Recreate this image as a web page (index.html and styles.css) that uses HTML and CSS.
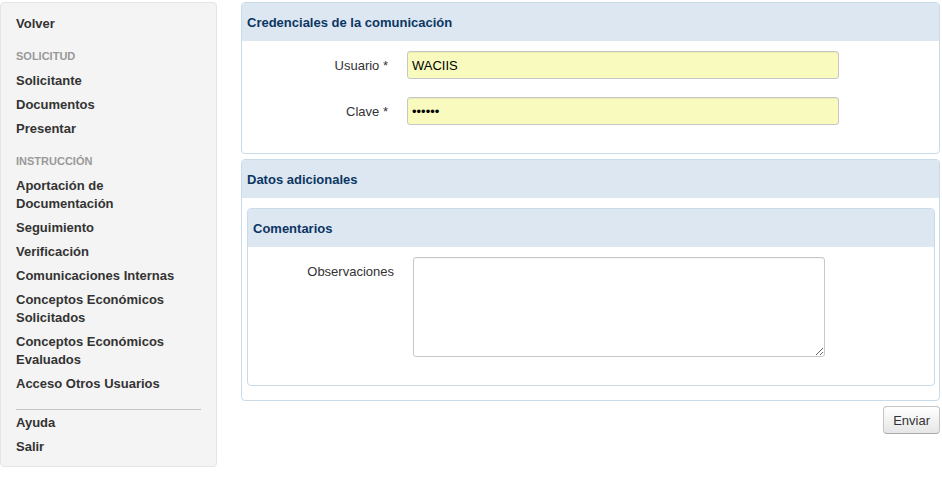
FILE: index.html
```html
<!DOCTYPE html>
<html lang="es">
<head>
<meta charset="utf-8">
<title>Credenciales</title>
<link rel="stylesheet" href="styles.css">
</head>
<body>
<div class="layout">
  <aside class="sidebar">
    <ul class="nav-list">
      <li><a href="#">Volver</a></li>
      <li class="nav-header">Solicitud</li>
      <li><a href="#">Solicitante</a></li>
      <li><a href="#">Documentos</a></li>
      <li><a href="#">Presentar</a></li>
      <li class="nav-header">Instrucción</li>
      <li><a href="#">Aportación de Documentación</a></li>
      <li><a href="#">Seguimiento</a></li>
      <li><a href="#">Verificación</a></li>
      <li><a href="#">Comunicaciones Internas</a></li>
      <li><a href="#">Conceptos Económicos Solicitados</a></li>
      <li><a href="#">Conceptos Económicos Evaluados</a></li>
      <li><a href="#">Acceso Otros Usuarios</a></li>
      <li class="divider"></li>
      <li><a href="#">Ayuda</a></li>
      <li><a href="#">Salir</a></li>
    </ul>
  </aside>
  <main class="main">
    <section class="panel">
      <h2 class="panel-title">Credenciales de la comunicación</h2>
      <div class="panel-body">
        <div class="row">
          <label class="row-label" for="usuario">Usuario *</label>
          <input class="field" id="usuario" type="text" value="WACIIS">
        </div>
        <div class="row">
          <label class="row-label" for="clave">Clave *</label>
          <input class="field" id="clave" type="password" value="secret">
        </div>
      </div>
    </section>
    <section class="panel">
      <h2 class="panel-title">Datos adicionales</h2>
      <div class="panel-body panel-body-outer">
        <section class="panel panel-inner">
          <h3 class="panel-title">Comentarios</h3>
          <div class="panel-body">
            <div class="row">
              <label class="row-label" for="obs">Observaciones</label>
              <textarea class="area" id="obs"></textarea>
            </div>
          </div>
        </section>
      </div>
    </section>
    <div class="actions">
      <button class="btn" type="button">Enviar</button>
    </div>
  </main>
</div>
</body>
</html>
```
FILE: styles.css
```css
* { box-sizing: border-box; }
html, body { margin: 0; padding: 0; background: #fff; }
body {
  font-family: "Liberation Sans", Arial, sans-serif;
  font-size: 13px;
  line-height: 18px;
  color: #333;
}
.layout {
  display: flex;
  align-items: flex-start;
  gap: 24px;
  padding-top: 2px;
}
.sidebar {
  width: 217px;
  flex: none;
  background: #f4f4f4;
  border: 1px solid #e4e4e4;
  border-radius: 4px;
  padding: 8px 0;
}
.nav-list {
  list-style: none;
  margin: 0;
  padding: 0 15px;
}
.nav-list li a {
  display: block;
  padding: 4px 0 2px;
  color: #333;
  font-weight: bold;
  text-decoration: none;
}
.nav-list .nav-header {
  padding: 3px 0;
  margin-top: 9px;
  font-size: 11px;
  font-weight: bold;
  color: #999;
  text-transform: uppercase;
}
.nav-list .divider {
  height: 1px;
  margin: 14px 0 0;
  background: #c4c4c4;
}
.main {
  width: 699px;
  flex: none;
}
.panel {
  border: 1px solid #c9dbe8;
  border-radius: 4px;
  background: #fff;
  margin-bottom: 5px;
  overflow: hidden;
}
.panel-title {
  margin: 0;
  height: 38px;
  padding: 11px 5px 9px;
  background: #dce7f2;
  color: #0c3662;
  font-size: 13px;
  line-height: 18px;
  font-weight: bold;
}
.panel-body {
  padding: 10px 0;
}
.panel-body-outer {
  padding: 10px 4px 14px 5px;
}
.panel-inner {
  margin-bottom: 0;
}
.row {
  display: grid;
  grid-template-columns: 146px auto;
  column-gap: 19px;
  align-items: start;
  margin-bottom: 18px;
}
.row-label {
  text-align: right;
  height: 28px;
  line-height: 26px;
  padding-top: 2px;
  color: #333;
}
.field {
  width: 432px;
  height: 28px;
  margin: 0;
  padding: 1px 4px 0;
  border: 1px solid #c6c6c6;
  border-radius: 3px;
  background: #f9fbbe;
  font-family: "Liberation Sans", Arial, sans-serif;
  font-size: 13px;
  color: #000;
  box-shadow: inset 0 1px 1px rgba(0,0,0,0.06);
}
.area {
  width: 412px;
  height: 100px;
  margin: 0;
  padding: 4px;
  border: 1px solid #c8c8c8;
  border-radius: 3px;
  background: #fff;
  font-family: "Liberation Sans", Arial, sans-serif;
  font-size: 13px;
  box-shadow: inset 0 1px 1px rgba(0,0,0,0.05);
}
.actions {
  display: flex;
  justify-content: flex-end;
}
.btn {
  height: 28px;
  padding: 1px 9px 0;
  border: 1px solid #c4c4c4;
  border-bottom-color: #aaa;
  border-radius: 4px;
  background: linear-gradient(#ffffff, #e6e6e6);
  font-family: "Liberation Sans", Arial, sans-serif;
  font-size: 13px;
  color: #333;
  cursor: pointer;
}
```
